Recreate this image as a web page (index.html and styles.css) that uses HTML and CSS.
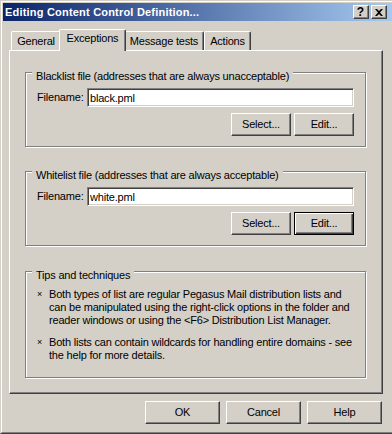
FILE: index.html
```html
<!DOCTYPE html>
<html lang="en">
<head>
    <meta charset="UTF-8">
    <title>Editing Content Control Definition</title>
    <link rel="stylesheet" href="styles.css">
</head>
<body>
    <div class="window">
        <div class="frame">
            <div class="titlebar">
                <span class="title">Editing Content Control Definition...</span>
                <div class="title-buttons">
                    <span class="tbtn help">?</span>
                    <span class="tbtn close">
                        <svg width="8" height="7" viewBox="0 0 8 7"><path d="M0 0h2l2 2 2-2h2L5 3.5 8 7H6L4 5 2 7H0l3-3.5z" fill="#000"/></svg>
                    </span>
                </div>
            </div>

            <div class="content">
                <div class="tabs">
                    <div class="tab t-general">General</div>
                    <div class="tab t-exceptions active">Exceptions</div>
                    <div class="tab t-tests">Message tests</div>
                    <div class="tab t-actions">Actions</div>
                </div>

                <div class="panel">
                    <div class="group">
                        <div class="legend">Blacklist file (addresses that are always unacceptable)</div>
                        <div class="file-row">
                            <label>Filename:</label>
                            <input class="field" type="text" value="black.pml">
                        </div>
                        <div class="btn-row">
                            <button class="btn">Select...</button>
                            <button class="btn">Edit...</button>
                        </div>
                    </div>

                    <div class="group">
                        <div class="legend">Whitelist file (addresses that are always acceptable)</div>
                        <div class="file-row">
                            <label>Filename:</label>
                            <input class="field" type="text" value="white.pml">
                        </div>
                        <div class="btn-row">
                            <button class="btn">Select...</button>
                            <button class="btn default">Edit...</button>
                        </div>
                    </div>

                    <div class="group tips">
                        <div class="legend">Tips and techniques</div>
                        <div class="tip">
                            <span class="bullet">&times;</span>
                            <p>Both types of list are regular Pegasus Mail distribution lists and<br>can be manipulated using the right-click options in the folder and<br>reader windows or using the &lt;F6&gt; Distribution List Manager.</p>
                        </div>
                        <div class="tip">
                            <span class="bullet">&times;</span>
                            <p>Both lists can contain wildcards for handling entire domains - see<br>the help for more details.</p>
                        </div>
                    </div>
                </div>

                <div class="dialog-buttons">
                    <button class="btn wide">OK</button>
                    <button class="btn wide">Cancel</button>
                    <button class="btn wide">Help</button>
                </div>
            </div>
        </div>
    </div>
</body>
</html>
```

FILE: styles.css
```css
body {
    margin: 0;
    overflow: hidden;
    background-color: #d4d0c8;
    font-family: "Liberation Sans", Arial, sans-serif;
    font-size: 11px;
    line-height: 13px;
    letter-spacing: -0.2px;
    color: #000;
}

.window {
    width: 396px;
    height: 434px;
    box-sizing: border-box;
    border: 1px solid;
    border-color: #d4d0c8 #404040 #404040 #d4d0c8;
}

.frame {
    height: 100%;
    box-sizing: border-box;
    border: 1px solid;
    border-color: #fff #808080 #808080 #fff;
    padding: 1px;
}

/* title bar */
.titlebar {
    height: 18px;
    display: flex;
    align-items: center;
    padding: 0 6px 0 2px;
    background: linear-gradient(to right, #0a246a, #a6caf0);
}

.title {
    color: #fff;
    font-weight: bold;
    letter-spacing: 0.2px;
}

.title-buttons {
    margin-left: auto;
    display: flex;
    gap: 2px;
}

.tbtn {
    width: 16px;
    height: 14px;
    box-sizing: border-box;
    display: flex;
    align-items: center;
    justify-content: center;
    background-color: #d4d0c8;
    border: 1px solid;
    border-color: #fff #404040 #404040 #fff;
    box-shadow: inset -1px -1px 0 #808080;
}

.tbtn.help {
    font-weight: bold;
    font-size: 12px;
    letter-spacing: 0;
    padding-right: 1px;
}

/* tabs */
.content {
    padding: 8px 0 0 6px;
}

.tabs {
    height: 21px;
    display: flex;
    align-items: flex-end;
    padding-left: 2px;
}

.tab {
    height: 19px;
    box-sizing: border-box;
    padding-top: 3px;
    text-align: center;
    border: 1px solid;
    border-bottom: none;
    border-color: #fff #404040 #404040 #fff;
    border-radius: 2px 2px 0 0;
    box-shadow: inset -1px 0 0 #808080;
}

.t-general { width: 50px; }
.t-exceptions { width: 63px; }
.t-tests { width: 80px; }
.t-actions { width: 47px; }

.tab.active {
    position: relative;
    z-index: 1;
    height: 22px;
    padding-top: 2px;
    margin: 0 -2px -1px;
    width: 67px;
    background-color: #d4d0c8;
}

/* tab page */
.panel {
    width: 374px;
    height: 344px;
    box-sizing: border-box;
    border: 1px solid;
    border-color: #fff #404040 #404040 #fff;
    box-shadow: inset -1px -1px 0 #808080;
    padding: 21px 16px 0 15px;
}

.group {
    position: relative;
    border: 1px solid #808080;
    box-shadow: inset 1px 1px 0 #fff, 1px 1px 0 #fff;
    padding: 15px 11px 10px;
}

.group + .group {
    margin-top: 24px;
}

.group.tips {
    margin-top: 25px;
    padding-top: 16px;
    padding-bottom: 15px;
}

.legend {
    position: absolute;
    top: -3px;
    left: 6px;
    padding: 0 4px;
    background-color: #d4d0c8;
}

.file-row {
    display: flex;
    align-items: center;
    height: 19px;
}

.file-row label {
    width: 50px;
}

.field {
    flex: 1;
    height: 19px;
    box-sizing: border-box;
    margin: 0;
    padding: 0 2px;
    border: 1px solid;
    border-color: #808080 #fff #fff #808080;
    box-shadow: inset 1px 1px 0 #404040, inset -1px -1px 0 #d4d0c8;
    font: inherit;
    letter-spacing: inherit;
    background: #fff;
    outline: none;
}

.btn-row {
    display: flex;
    justify-content: flex-end;
    gap: 3px;
    margin-top: 6px;
}

.btn {
    width: 60px;
    height: 23px;
    margin: 0;
    padding: 0;
    box-sizing: border-box;
    background-color: #d4d0c8;
    border: 1px solid;
    border-color: #fff #404040 #404040 #fff;
    box-shadow: inset -1px -1px 0 #808080;
    font: inherit;
    letter-spacing: inherit;
    color: #000;
}

.btn.default {
    border-color: #000;
    box-shadow: inset 1px 1px 0 #fff, inset -1px -1px 0 #404040, inset -2px -2px 0 #808080;
}

.btn.wide {
    width: 75px;
}

/* tips */
.tip {
    display: flex;
}

.tip + .tip {
    margin-top: 9px;
}

.bullet {
    width: 12px;
    flex: none;
    font-size: 9px;
}

.tip p {
    margin: 0;
}

.dialog-buttons {
    width: 374px;
    box-sizing: border-box;
    display: flex;
    justify-content: flex-end;
    gap: 6px;
    margin-top: 7px;
    padding-right: 1px;
}
```
